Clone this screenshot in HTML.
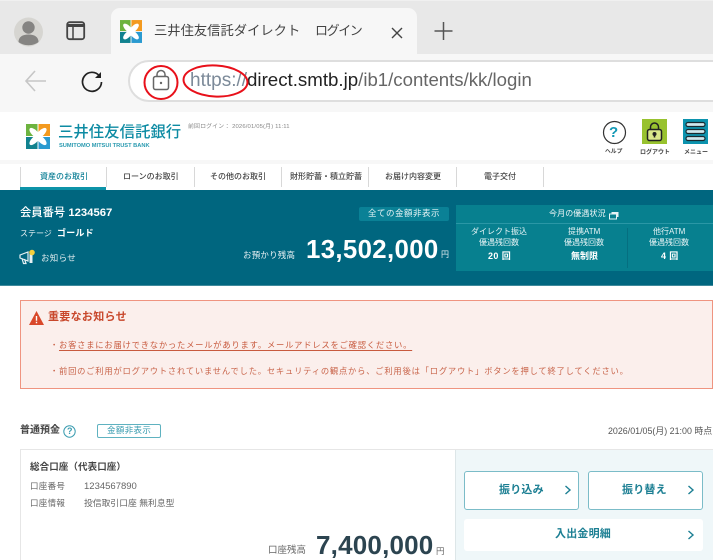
<!DOCTYPE html>
<html lang="ja"><head><meta charset="utf-8"><title>三井住友信託ダイレクト ログイン</title>
<style>
html,body{margin:0;padding:0;background:#fff}
#p{position:relative;width:713px;height:560px;overflow:hidden;background:#fff;font-family:"Liberation Sans","Noto Sans CJK JP",sans-serif;color:#333;filter:blur(.3px)}
#p div,#p svg{position:absolute}
.t{white-space:nowrap;line-height:1}
.n{font-size:8px;font-weight:500;color:#444;top:173px}
</style></head><body>
<div id="p">
<!-- browser chrome -->
<div style="left:0;top:0;width:713px;height:54px;background:#e8e8e8;border-top:1px solid #f0f0f0;box-sizing:border-box"></div>
<div style="left:111px;top:8px;width:306px;height:46px;background:#f7f7f7;border-radius:9px 9px 0 0"></div>
<div style="left:0;top:54px;width:713px;height:58px;background:#f7f7f7"></div>
<svg style="left:14px;top:16px" width="30" height="32" viewBox="0 0 30 32"><circle cx="14.5" cy="16" r="14.5" fill="#d6d5d1"/><circle cx="14.5" cy="11.5" r="6.2" fill="#858482"/><path d="M4.5 26c0-5 4-7.5 10-7.5s10 2.5 10 7.5c-2.5 2-6 3.2-10 3.2s-7.5-1.2-10-3.2z" fill="#858482"/></svg>
<svg style="left:66px;top:21px" width="21" height="21" viewBox="0 0 21 21"><rect x="1.2" y="1.2" width="17" height="17" rx="2.5" fill="none" stroke="#444" stroke-width="1.8"/><path d="M1.5 4.5h16.500" stroke="#444" stroke-width="3"/><path d="M7 6v12" stroke="#444" stroke-width="1.5"/></svg>
<svg style="left:120px;top:20px" width="22" height="23" viewBox="0 0 24 25"><rect width="11.500" height="12" fill="#6db33f"/><rect x="12.500" width="11.500" height="12" fill="#f39a1f"/><rect y="13" width="11.500" height="12" fill="#11828f"/><rect x="12.500" y="13" width="11.500" height="12" fill="#2a9ad0"/><g fill="#fff"><ellipse cx="8.500" cy="9" rx="6.500" ry="3" transform="rotate(45 8.500 9)"/><ellipse cx="15.500" cy="9" rx="6.500" ry="3" transform="rotate(-45 15.500 9)"/><ellipse cx="8.500" cy="16" rx="6.500" ry="3" transform="rotate(-45 8.500 16)"/><ellipse cx="15.500" cy="16" rx="6.500" ry="3" transform="rotate(45 15.500 16)"/></g></svg>
<div class="t" style="left:154px;top:24px;font-size:13.300px;color:#444">三井住友信託ダイレクト</div>
<div class="t" style="left:315px;top:24px;font-size:13px;color:#444;letter-spacing:-1.400px">ログイン</div>
<svg style="left:390px;top:26px" width="14" height="14" viewBox="0 0 14 14"><path d="M2 2l10 10M12 2L2 12" stroke="#444" stroke-width="1.4"/></svg>
<svg style="left:434px;top:21px" width="20" height="20" viewBox="0 0 20 20"><path d="M9.500 1v18M.5 10h18" stroke="#555" stroke-width="1.5"/></svg>
<svg style="left:24px;top:69px" width="24" height="24" viewBox="0 0 24 24"><path d="M2 12h20M11 2L2 12l9 10" fill="none" stroke="#c6c6c6" stroke-width="1.6"/></svg>
<svg style="left:80px;top:69px" width="24" height="24" viewBox="0 0 24 24"><path d="M19.500 7A9.500 9.500 0 1 0 21.500 13" fill="none" stroke="#222" stroke-width="1.7"/><path d="M21 3v6h-6z" fill="#222"/></svg>
<div style="left:128px;top:60px;width:620px;height:42px;background:#fff;border:2px solid #dedede;border-radius:21px;box-sizing:border-box"></div>
<svg style="left:151px;top:68px" width="20" height="24" viewBox="0 0 20 24"><rect x="2.500" y="8.500" width="15" height="13" rx="2" fill="none" stroke="#666" stroke-width="1.5"/><path d="M6 8.500V6.500a4 4 0 0 1 8 0v2" fill="none" stroke="#666" stroke-width="1.5"/><circle cx="10" cy="15" r="1.200" fill="#666"/></svg>
<div class="t" style="left:190px;top:71px;font-size:19px;color:#7c8a99">https://<span style="color:#222;font-size:18.700px">direct.smtb.jp</span><span style="color:#666;font-size:18.600px">/ib1/contents/kk/login</span></div>
<svg style="left:143px;top:63px" width="110" height="38" viewBox="0 0 110 38"><circle cx="18" cy="19.500" r="16.500" fill="none" stroke="#e8101a" stroke-width="2"/><ellipse cx="72.500" cy="18" rx="32" ry="15.500" fill="none" stroke="#e8101a" stroke-width="2" transform="rotate(3 72.500 18)"/></svg>

<!-- header -->
<svg style="left:26px;top:124px" width="24" height="25" viewBox="0 0 24 25"><rect width="11.500" height="12" fill="#6db33f"/><rect x="12.500" width="11.500" height="12" fill="#f39a1f"/><rect y="13" width="11.500" height="12" fill="#11828f"/><rect x="12.500" y="13" width="11.500" height="12" fill="#2a9ad0"/><g fill="#fff"><ellipse cx="8.500" cy="9" rx="6.500" ry="3" transform="rotate(45 8.500 9)"/><ellipse cx="15.500" cy="9" rx="6.500" ry="3" transform="rotate(-45 15.500 9)"/><ellipse cx="8.500" cy="16" rx="6.500" ry="3" transform="rotate(-45 8.500 16)"/><ellipse cx="15.500" cy="16" rx="6.500" ry="3" transform="rotate(45 15.500 16)"/></g></svg>
<div class="t" style="left:58px;top:125px;font-size:15.400px;color:#0d8ba3;font-weight:500">三井住友信託銀行</div>
<div class="t" style="left:59px;top:144px;font-size:5.700px;color:#2a9ab0;font-weight:700">SUMITOMO MITSUI TRUST BANK</div>
<div class="t" style="left:188px;top:125px;font-size:5.900px;color:#888;letter-spacing:.15px">前回ログイン： 2026/01/05(月) 11:11</div>
<svg style="left:602px;top:120px" width="25" height="25" viewBox="0 0 25 25"><circle cx="12.500" cy="12.500" r="11" fill="#fff" stroke="#333" stroke-width="1.2"/></svg>
<div class="t" style="left:609px;top:125px;font-size:15px;color:#1298b5;font-weight:700">?</div>
<div class="t" style="left:605px;top:150px;font-size:5.800px;color:#444;font-weight:700">ヘルプ</div>
<div style="left:642px;top:119px;width:25px;height:25px;background:#98c22f"></div>
<svg style="left:646px;top:122px" width="17" height="20" viewBox="0 0 17 20"><rect x="1.500" y="7.500" width="14" height="11" rx="2" fill="#d9e88a" stroke="#222" stroke-width="1.5"/><path d="M4.500 7.500V5a4 4 0 0 1 8 0v2.500" fill="none" stroke="#222" stroke-width="1.5"/><circle cx="8.500" cy="12" r="2" fill="#222"/><path d="M7.700 12h1.600v3.500H7.700z" fill="#222"/></svg>
<div class="t" style="left:640px;top:150px;font-size:6px;color:#444;font-weight:700">ログアウト</div>
<div style="left:683px;top:119px;width:25px;height:25px;background:#0c93ae"></div>
<svg style="left:685px;top:121px" width="21" height="21" viewBox="0 0 21 21"><g fill="#cfe8ee" stroke="#1a2a30" stroke-width="1.200"><rect x="1" y="1.500" width="19" height="4" rx="2"/><rect x="1" y="8.500" width="19" height="4" rx="2"/><rect x="1" y="15.500" width="19" height="4" rx="2"/></g></svg>
<div class="t" style="left:684px;top:150px;font-size:6px;color:#444;font-weight:700">メニュー</div>

<!-- nav -->
<div style="left:0;top:160px;width:713px;height:4px;background:#f7f7f7"></div>
<div style="left:20px;top:167px;width:1px;height:20px;background:#d8d8d8"></div>
<div style="left:106px;top:167px;width:1px;height:20px;background:#d8d8d8"></div>
<div style="left:194px;top:167px;width:1px;height:20px;background:#d8d8d8"></div>
<div style="left:281px;top:167px;width:1px;height:20px;background:#d8d8d8"></div>
<div style="left:368px;top:167px;width:1px;height:20px;background:#d8d8d8"></div>
<div style="left:456px;top:167px;width:1px;height:20px;background:#d8d8d8"></div>
<div style="left:543px;top:167px;width:1px;height:20px;background:#d8d8d8"></div>
<div class="t n" style="left:40px;color:#0d7f96">資産のお取引</div>
<div class="t n" style="left:123px">ローンのお取引</div>
<div class="t n" style="left:210px">その他のお取引</div>
<div class="t n" style="left:290px">財形貯蓄・積立貯蓄</div>
<div class="t n" style="left:385px">お届け内容変更</div>
<div class="t n" style="left:484px">電子交付</div>
<div style="left:20px;top:187px;width:86px;height:3px;background:#0d93a8;z-index:2"></div>

<!-- banner -->
<div style="left:0;top:190px;width:713px;height:96px;background:#00667f;border-bottom:1px solid #3f8a9c;box-sizing:border-box"></div>
<div class="t" style="left:20px;top:208px;font-size:11.300px;color:#fff;font-weight:500">会員番号 <b>1234567</b></div>
<div class="t" style="left:20px;top:230px;font-size:8px;color:#e6f0f3">ステージ</div>
<div class="t" style="left:57px;top:229px;font-size:9px;color:#fff;font-weight:700;letter-spacing:.2px">ゴールド</div>
<svg style="left:19px;top:249px" width="18" height="17" viewBox="0 0 18 17"><path d="M1 6l8-3v9L1 9z M3 9.500l1.500 5h2.500l-1.500-4.500" fill="none" stroke="#e6f0f3" stroke-width="1.2"/><rect x="10.500" y="5" width="3" height="9" fill="#e6f0f3"/><circle cx="13" cy="3.500" r="2.800" fill="#f5cf3c"/></svg>
<div class="t" style="left:41px;top:254px;font-size:8.500px;color:#e0ecef;letter-spacing:.3px">お知らせ</div>
<div class="t" style="left:243px;top:251px;font-size:8.500px;color:#e6f0f3;letter-spacing:.2px">お預かり残高</div>
<div class="t" style="left:306px;top:238px;font-size:25.800px;color:#fff;font-weight:700;letter-spacing:.35px">13,502,000</div>
<div class="t" style="left:441px;top:251px;font-size:8px;color:#e6f0f3">円</div>
<div style="left:359px;top:207px;width:90px;height:14px;background:#0a8196;border-radius:2px"></div>
<div class="t" style="left:368px;top:209px;font-size:8.500px;color:#e6f3f5;letter-spacing:.5px">全ての金額非表示</div>
<div style="left:456px;top:205px;width:257px;height:66px;background:#07808f"></div>
<div style="left:456px;top:223px;width:257px;height:1px;background:#2a97a6"></div>
<div style="left:627px;top:228px;width:1px;height:40px;background:#056f80"></div>
<div class="t" style="left:549px;top:210px;font-size:8px;color:#f0f7f8;letter-spacing:.1px">今月の優遇状況</div>
<svg style="left:609px;top:211px" width="10" height="9" viewBox="0 0 10 9"><rect x=".5" y="3" width="7" height="5" fill="none" stroke="#e6f3f5"/><path d="M2.500 1h7v5h-2V3h-5z" fill="#e6f3f5"/></svg>
<div class="t" style="left:471px;top:228px;font-size:8px;color:#e6f3f5">ダイレクト振込</div>
<div class="t" style="left:479px;top:239px;font-size:8px;color:#e6f3f5">優遇残回数</div>
<div class="t" style="left:488px;top:252px;font-size:9px;color:#fff;font-weight:700;letter-spacing:.4px">20 回</div>
<div class="t" style="left:568px;top:228px;font-size:8px;color:#e6f3f5">提携ATM</div>
<div class="t" style="left:564px;top:239px;font-size:8px;color:#e6f3f5">優遇残回数</div>
<div class="t" style="left:571px;top:252px;font-size:9px;color:#fff;font-weight:700">無制限</div>
<div class="t" style="left:653px;top:228px;font-size:8px;color:#e6f3f5">他行ATM</div>
<div class="t" style="left:649px;top:239px;font-size:8px;color:#e6f3f5">優遇残回数</div>
<div class="t" style="left:661px;top:252px;font-size:9px;color:#fff;font-weight:700;letter-spacing:.4px">4 回</div>

<!-- alert -->
<div style="left:20px;top:300px;width:693px;height:89px;background:#fbefec;border:1px solid #ef9480;box-sizing:border-box"></div>
<svg style="left:29px;top:311px" width="15" height="14" viewBox="0 0 15 14"><path d="M7.500 0L15 14H0z" fill="#d9482a"/><path d="M6.800 5h1.400v4.800H6.800zM6.800 10.800h1.400v1.400H6.800z" fill="#fff"/></svg>
<div class="t" style="left:48px;top:312px;font-size:11px;color:#c8472b;font-weight:700;letter-spacing:.3px">重要なお知らせ</div>
<div class="t" style="left:50px;top:341px;font-size:8.300px;color:#cc6a50">・</div>
<div class="t" style="left:59px;top:341px;font-size:8.300px;color:#c85a3e;letter-spacing:.78px;text-decoration:underline;text-underline-offset:2px">お客さまにお届けできなかったメールがあります。メールアドレスをご確認ください。</div>
<div class="t" style="left:50px;top:367px;font-size:8.300px;color:#cc6a50">・</div>
<div class="t" style="left:59px;top:367px;font-size:8.300px;color:#c9664c;letter-spacing:.78px">前回のご利用がログアウトされていませんでした。セキュリティの観点から、ご利用後は「ログアウト」ボタンを押して終了してください。</div>

<!-- account -->
<div class="t" style="left:20px;top:426px;font-size:10px;color:#444;font-weight:700">普通預金</div>
<svg style="left:63px;top:425px" width="13" height="13" viewBox="0 0 13 13"><circle cx="6.500" cy="6.500" r="5.700" fill="none" stroke="#3a9cb0" stroke-width="1"/></svg>
<div class="t" style="left:67px;top:427px;font-size:9px;color:#3a9cb0;font-weight:700">?</div>
<div style="left:97px;top:424px;width:64px;height:14px;background:#fff;border:1px solid #5fb2c0;border-radius:2px;box-sizing:border-box"></div>
<div class="t" style="left:107px;top:426px;font-size:8.500px;color:#3a9cb0;letter-spacing:.35px">金額非表示</div>
<div class="t" style="left:608px;top:427px;font-size:8.900px;color:#555">2026/01/05(月) 21:00 時点</div>
<div style="left:20px;top:449px;width:693px;height:120px;background:#fff;border:1px solid #e6e6e6;box-sizing:border-box"></div>
<div style="left:455px;top:450px;width:258px;height:110px;background:#eff7f9;border-left:1px solid #dde6e8;box-sizing:border-box"></div>
<div class="t" style="left:30px;top:463px;font-size:9.500px;color:#444;font-weight:700;letter-spacing:.1px">総合口座（代表口座）</div>
<div class="t" style="left:30px;top:482px;font-size:8.500px;color:#666;letter-spacing:.3px">口座番号</div>
<div class="t" style="left:84px;top:482px;font-size:9.500px;color:#666">1234567890</div>
<div class="t" style="left:30px;top:499px;font-size:8.500px;color:#666;letter-spacing:.3px">口座情報</div>
<div class="t" style="left:84px;top:499px;font-size:8.800px;color:#666">投信取引口座 無利息型</div>
<div class="t" style="left:268px;top:546px;font-size:9.500px;color:#666">口座残高</div>
<div class="t" style="left:316px;top:532px;font-size:26px;color:#2c4450;font-weight:700;letter-spacing:.2px">7,400,000</div>
<div class="t" style="left:436px;top:547px;font-size:8.500px;color:#666">円</div>

<div style="left:464px;top:471px;width:115px;height:39px;background:#fff;border:1px solid #7bbcc8;border-radius:3px;box-sizing:border-box"></div>
<div style="left:588px;top:471px;width:115px;height:39px;background:#fff;border:1px solid #7bbcc8;border-radius:3px;box-sizing:border-box"></div>
<div style="left:464px;top:519px;width:239px;height:32px;background:#fff;border-radius:3px"></div>
<div class="t" style="left:499px;top:485px;font-size:11px;color:#1c7f93;font-weight:700;letter-spacing:.2px">振り込み</div>
<div class="t" style="left:622px;top:485px;font-size:11px;color:#1c7f93;font-weight:700;letter-spacing:.2px">振り替え</div>
<div class="t" style="left:555px;top:529px;font-size:11px;color:#1c7f93;font-weight:700;letter-spacing:.2px">入出金明細</div>
<svg style="left:564px;top:485px" width="8" height="10" viewBox="0 0 8 10"><path d="M1.500 1l4.500 4-4.500 4" fill="none" stroke="#1c7f93" stroke-width="1.4"/></svg>
<svg style="left:687px;top:485px" width="8" height="10" viewBox="0 0 8 10"><path d="M1.500 1l4.500 4-4.500 4" fill="none" stroke="#1c7f93" stroke-width="1.4"/></svg>
<svg style="left:687px;top:530px" width="8" height="10" viewBox="0 0 8 10"><path d="M1.500 1l4.500 4-4.500 4" fill="none" stroke="#1c7f93" stroke-width="1.4"/></svg>
</div>
</body></html>
